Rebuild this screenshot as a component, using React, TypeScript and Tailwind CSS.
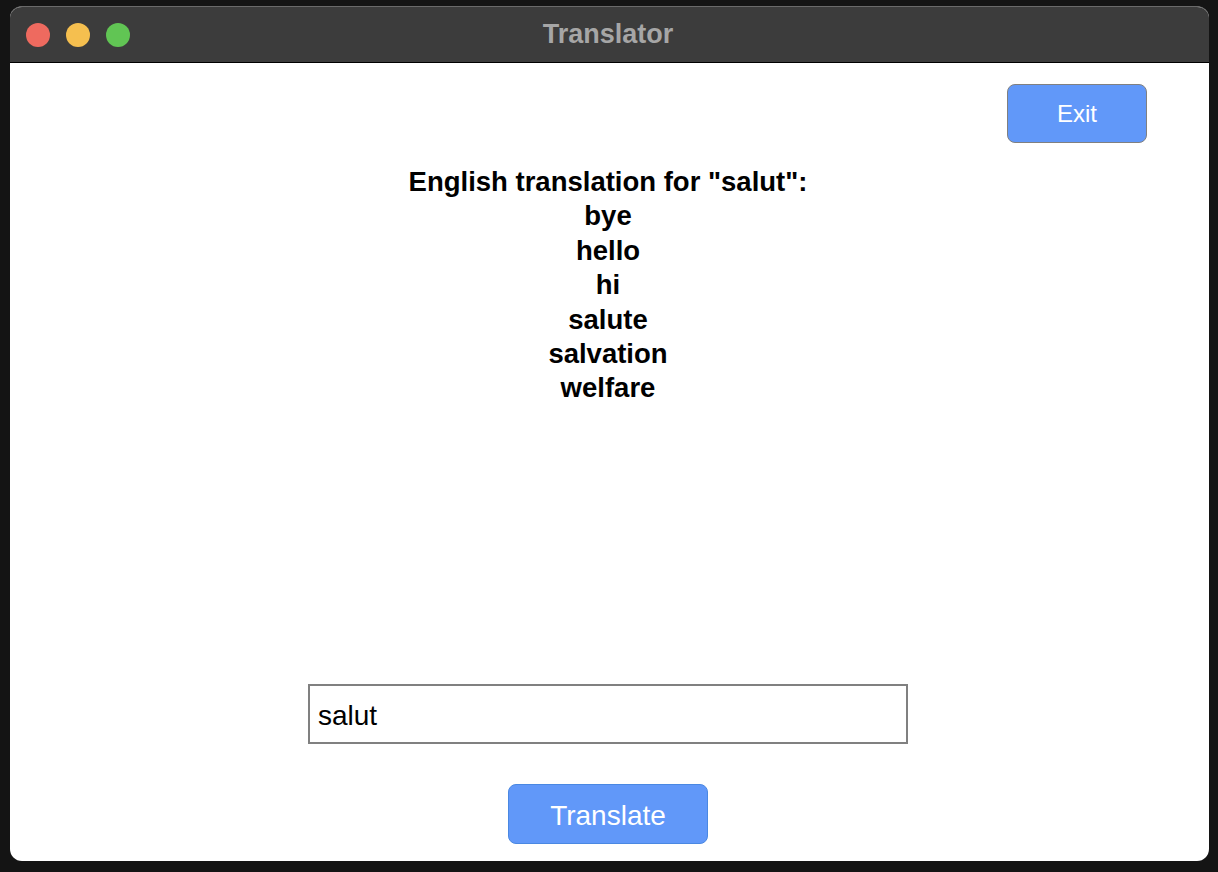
import React, { useState } from 'react';

const translations = ['bye', 'hello', 'hi', 'salute', 'salvation', 'welfare'];

export default function App() {
  const [word, setWord] = useState('salut');

  return (
    <div className="h-[872px] w-[1218px] bg-[#141414] pl-[10px] pt-[6px] font-['Liberation_Sans',Arial,sans-serif]">
      <div className="flex h-[855px] w-[1199px] flex-col overflow-hidden rounded-[12px] border-t border-[#6a6a6a] bg-white">
        {/* Title bar */}
        <div className="relative flex h-[56px] shrink-0 items-center justify-center border-b border-black bg-[#3c3c3c] pr-[3px]">
          <div className="absolute left-[16px] top-[16px] flex gap-[16px]">
            <span className="block size-[24px] rounded-full bg-[#ee6a5f]" />
            <span className="block size-[24px] rounded-full bg-[#f5bf4f]" />
            <span className="block size-[24px] rounded-full bg-[#61c554]" />
          </div>
          <span className="-mt-[1px] text-[27px] font-bold text-[#a6a6a6]">Translator</span>
        </div>

        {/* Content */}
        <div className="flex flex-1 flex-col items-center pb-[17px] pr-[3px] pt-[21px]">
          <div className="flex w-full justify-end pr-[59px]">
            <button className="h-[59px] w-[140px] rounded-[8px] border-[1.5px] border-[#808080] bg-[#6198f9] text-[24px] text-white">
              Exit
            </button>
          </div>

          <div className="mt-[22px] flex flex-col items-center text-[27.5px] font-bold leading-[34.4px] text-black">
            <p>English translation for "{word}":</p>
            {translations.map((t) => (
              <p key={t}>{t}</p>
            ))}
          </div>

          <input
            className="mt-auto h-[60px] w-[600px] border-2 border-[#808080] px-[8px] pt-[3px] text-[28px] text-black outline-none"
            value={word}
            onChange={(e) => setWord(e.target.value)}
          />

          <button className="mt-[40px] h-[60px] w-[200px] rounded-[8px] border border-[#4a88e2] bg-[#6198f9] pt-[3px] text-[28px] text-white">
            Translate
          </button>
        </div>
      </div>
    </div>
  );
}
